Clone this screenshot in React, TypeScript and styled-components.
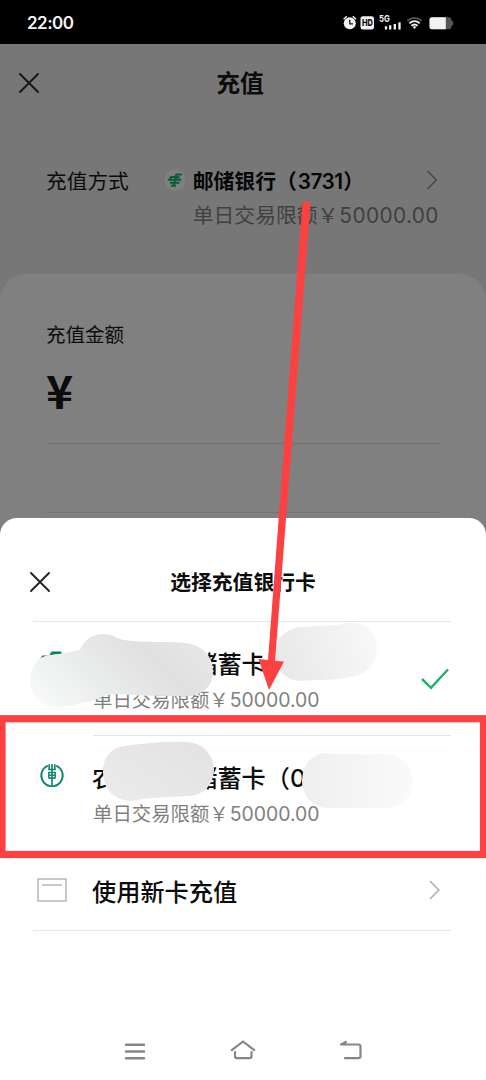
import React from 'react';
import styled, { createGlobalStyle } from 'styled-components';

const GlobalStyle = createGlobalStyle`
  * { box-sizing: border-box; }
  body { margin: 0; background: #fff; }
  svg { display: block; flex: none; }
`;

const Phone = styled.div`
  position: relative;
  width: 486px;
  height: 1080px;
  overflow: hidden;
  background: #777;
  color: #0c0c0c;
  font-family: Inter, 'Noto Sans CJK SC', sans-serif;
`;

const StatusBar = styled.header`
  display: flex;
  align-items: center;
  justify-content: space-between;
  height: 44px;
  padding: 2px 32px 0 27px;
  background: #000;
  color: #f4f4f4;
`;

const Clock = styled.span`
  font-size: 17px;
  font-weight: 600;
  line-height: 20px;
  letter-spacing: -0.5px;
`;

const StatusIcons = styled.div`
  display: flex;
  align-items: center;
`;

const TitleBar = styled.div<{ $height: number; $left: number; $size: number; $top?: number; $end?: number }>`
  display: grid;
  grid-template-columns: 60px 1fr ${(p) => p.$end ?? 60}px;
  align-items: center;
  height: ${(p) => p.$height}px;
  padding-top: ${(p) => p.$top ?? 0}px;
  > svg { margin-left: ${(p) => p.$left}px; }
  > h1 { font-size: ${(p) => p.$size}px; }
`;

const Title = styled.h1`
  margin: 0;
  padding-top: 2px;
  text-align: center;
  font-weight: 700;
  line-height: 32px;
  white-space: nowrap;
`;

const Method = styled.section`
  display: flex;
  height: 152px;
  padding: 44px 46px 0 46px;
`;

const FieldLabel = styled.div<{ $size: number }>`
  padding-top: 1px;
  font-size: ${(p) => p.$size}px;
  line-height: 30px;
  font-weight: 400;
  white-space: nowrap;
`;

const MethodIcon = styled.div`
  display: flex;
  align-items: center;
  height: 28px;
  margin: 0 7px 0 35px;
`;

const MethodText = styled.div`
  flex: 1;
  width: 0;
  white-space: nowrap;
`;

const MethodName = styled.div`
  padding-top: 1px;
  font-size: 20.8px;
  font-weight: 600;
  line-height: 30px;
  color: #050505;
`;

const Digits = styled.span<{ $spacing?: number; $before?: number; $after?: number }>`
  margin-left: ${(p) => p.$before ?? 1}px;
  margin-right: ${(p) => p.$after ?? 0}px;
  letter-spacing: ${(p) => p.$spacing ?? 0}px;
`;

const Limit = styled.div<{ $size: number; $color: string; $gap: number }>`
  padding-top: ${(p) => p.$gap}px;
  font-size: ${(p) => p.$size}px;
  line-height: 30px;
  color: ${(p) => p.$color};
  white-space: nowrap;
`;

const MethodArrow = styled.div`
  display: flex;
  align-items: center;
  width: 14px;
  height: 28px;
`;

const AmountCard = styled.section`
  height: 806px;
  padding: 45px 46px 0;
  border-radius: 26px 26px 0 0;
  background: #808080;
`;

const Currency = styled.div`
  height: 94px;
  padding-top: 9px;
  border-bottom: 1px solid #737373;
  font-family: 'Noto Sans CJK SC', sans-serif;
  font-size: 46px;
  font-weight: 700;
  line-height: 60px;
`;

const AmountNote = styled.div`
  height: 69px;
  border-bottom: 1px solid #757575;
`;

const Sheet = styled.section`
  position: absolute;
  left: 0;
  right: 0;
  top: 518px;
  bottom: 0;
  display: flex;
  flex-direction: column;
  border-radius: 17px 17px 0 0;
  background: #fff;
`;

const CardList = styled.div`
  margin: 0 35px 0 33px;
  border-top: 1px solid #e6e6e6;
  border-bottom: 1px solid #e6e6e6;
`;

const CardRow = styled.div<{ $height: number; $top: number }>`
  display: grid;
  grid-template-columns: 60px 1fr 31px;
  height: ${(p) => p.$height}px;
  > * { padding-top: ${(p) => p.$top}px; }
`;

const CardInfo = styled.div<{ $divided?: boolean }>`
  grid-column: ${(p) => (p.$divided ? '2 / 4' : 'auto')};
  border-top: ${(p) => (p.$divided ? '1px solid #e3e6e6' : 'none')};
  white-space: nowrap;
`;

const CardName = styled.div`
  margin-left: -1px;
  padding-top: 1px;
  font-size: 24.2px;
  font-weight: 500;
  line-height: 36px;
  word-spacing: -2px;
`;

const IconCell = styled.div<{ $shift: number; $left?: number }>`
  display: flex;
  align-items: flex-start;
  svg {
    margin-top: ${(p) => p.$shift}px;
    margin-left: ${(p) => p.$left ?? 0}px;
  }
`;

const NavBar = styled.nav`
  display: flex;
  align-items: center;
  justify-content: space-between;
  height: 58px;
  margin-top: auto;
  padding: 0 122px 0 122px;
`;

const Annotations = styled.svg`
  position: absolute;
  inset: 0;
`;

const CloseIcon = ({ color }: { color: string }) => (
  <svg width="20" height="20" viewBox="0 0 20 20" stroke={color} strokeWidth="1.9" strokeLinecap="round">
    <path d="M1 1L19 19M19 1L1 19" />
  </svg>
);

const Chevron = ({ color }: { color: string }) => (
  <svg width="12" height="20" viewBox="0 0 12 20" fill="none" stroke={color} strokeWidth="1.7">
    <path d="M1.5 1L10.3 10L1.5 19" />
  </svg>
);

const PostBankLogo = ({ size, disc, color }: { size: number; disc: string; color: string }) => (
  <svg width={size} height={size} viewBox="0 0 22 22">
    <circle cx="11" cy="11" r="10.5" fill={disc} />
    <g fill="none" stroke={color} strokeWidth="1.9">
      <path d="M18 5.5H12.5L11 8H6.8L6 9.8M3.8 10.8H17.2M6 13.8H15.5M15.8 8.2H11M12.6 5.5L9.5 17M7 16.8H12" />
    </g>
  </svg>
);

const AgriBankLogo = () => (
  <svg width="34" height="34" viewBox="0 0 34 34" fill="none">
    <circle cx="17" cy="17" r="16" fill="#fffefe" stroke="#f8f1f0" strokeWidth="0.8" />
    <g stroke="#148774">
      <path strokeWidth="2.1" d="M12.8 6.6A10.8 10.8 0 0 0 14.6 27M21.2 6.6A10.8 10.8 0 0 1 19.4 27" />
      <path strokeWidth="1.7" d="M17 5V28M14.2 5.2V11M19.8 5.2V11" />
      <path strokeWidth="1.5" d="M13.3 10.5H20.7M13.6 13.6H20.4M13.6 16.3H20.4M13.8 12.8V19.5M20.2 12.8V19.5" />
      <path strokeWidth="1.8" d="M14 19.2H20M14 27.2H20" />
    </g>
  </svg>
);

export default function App() {
  return (
    <Phone>
      <GlobalStyle />
      <StatusBar>
        <Clock>22:00</Clock>
        <StatusIcons>
          <svg width="111" height="18" viewBox="343 13.7 111 18">
            <circle cx="349.8" cy="23" r="6" fill="#f2f2f2" />
            <path d="M343.6 19L346.8 16M356 19L352.8 16" stroke="#f2f2f2" strokeWidth="1.4" />
            <path d="M349.8 19.5V23.6H353" stroke="#111" strokeWidth="1.3" fill="none" />
            <rect x="360.5" y="16" width="13.5" height="13.3" rx="2.5" fill="#f2f2f2" />
            <text x="361.9" y="26.2" fontSize="9.6" fontWeight="800" fill="#111" textLength="11" lengthAdjust="spacingAndGlyphs">HD</text>
            <text x="379" y="22.2" fontSize="9.3" fontWeight="700" fill="#f2f2f2" textLength="10.8" lengthAdjust="spacingAndGlyphs">5G</text>
            <path d="M386 26V29.3M390.2 25V29.3M394.8 23.7V29.3" stroke="#f2f2f2" strokeWidth="2.3" />
            <path d="M399.5 22V29.3" stroke="#f2f2f2" strokeWidth="2.3" />
            <g fill="none" strokeWidth="1.8">
              <path d="M407.3 20.5Q414.5 14.6 421.7 20.5" stroke="#555" />
              <path d="M409.3 23Q414.5 18.7 419.7 23" stroke="#f2f2f2" />
              <path d="M411.4 25.5Q414.5 22.9 417.6 25.5" stroke="#f2f2f2" />
            </g>
            <path d="M412.5 26.5Q414.5 25.3 416.5 26.5L414.5 28.7Z" fill="#f2f2f2" />
            <path d="M432 17H449Q451.4 17 451.4 19.4V20.3L453.2 21.3V24.8L451.4 25.8V26.6Q451.4 29 449 29H432Q429.5 29 429.5 26.5V19.5Q429.5 17 432 17Z" fill="#555" />
            <path d="M445.8 17H432Q429.5 17 429.5 19.5V26.5Q429.5 29 432 29H445.8Z" fill="#f2f2f2" />
          </svg>
        </StatusIcons>
      </StatusBar>

      <TitleBar $height={78} $left={18.5} $size={23.8} $end={66}>
        <CloseIcon color="#161616" />
        <Title>充值</Title>
      </TitleBar>

      <Method>
        <FieldLabel $size={20.7}>充值方式</FieldLabel>
        <MethodIcon>
          <PostBankLogo size={22} disc="#808080" color="#075f38" />
        </MethodIcon>
        <MethodText>
          <MethodName>
            邮储银行（<Digits $spacing={-0.5} $after={0.5}>3731</Digits>）
          </MethodName>
          <Limit $size={20.8} $color="#404040" $gap={4}>
            单日交易限额￥<Digits $spacing={0.4}>50000.00</Digits>
          </Limit>
        </MethodText>
        <MethodArrow>
          <Chevron color="#4b4b4b" />
        </MethodArrow>
      </Method>

      <AmountCard>
        <FieldLabel $size={19.5}>充值金额</FieldLabel>
        <Currency>¥</Currency>
        <AmountNote />
      </AmountCard>

      <Sheet>
        <TitleBar $height={103} $left={30} $size={20.8} $top={24}>
          <CloseIcon color="#222" />
          <Title>选择充值银行卡</Title>
        </TitleBar>
        <CardList>
          <CardRow $height={113} $top={24}>
            <IconCell $shift={-2} $left={-1}>
              <PostBankLogo size={36} disc="#fff" color="#00864f" />
            </IconCell>
            <CardInfo>
              <CardName>邮储银行 储蓄卡</CardName>
              <Limit $size={19.4} $color="#7f7f7f" $gap={2}>
                单日交易限额￥<Digits>50000.00</Digits>
              </Limit>
            </CardInfo>
            <IconCell $shift={22}>
              <svg width="30" height="22" viewBox="0 0 30 22" fill="none" stroke="#1db36b" strokeWidth="2.5">
                <path d="M2 11L11 19.8L28 1.5" />
              </svg>
            </IconCell>
          </CardRow>
          <CardRow $height={119} $top={24}>
            <IconCell $shift={0} $left={1.5}>
              <AgriBankLogo />
            </IconCell>
            <CardInfo $divided>
              <CardName>农业银行 储蓄卡（0</CardName>
              <Limit $size={19.4} $color="#7f7f7f" $gap={2}>
                单日交易限额￥<Digits>50000.00</Digits>
              </Limit>
            </CardInfo>
          </CardRow>
          <CardRow $height={76} $top={20}>
            <IconCell $shift={4}>
              <svg width="34" height="24" viewBox="0 0 34 24" fill="none" stroke="#b7b7b7" strokeWidth="1.5">
                <path d="M5 1H33V23H5ZM9 7H29" />
              </svg>
            </IconCell>
            <CardInfo>
              <CardName>使用新卡充值</CardName>
            </CardInfo>
            <IconCell $shift={6} $left={1}>
              <svg width="20" height="20" viewBox="0 0 20 20" fill="none" stroke="#b2b2b2" strokeWidth="1.7">
                <path d="M9 1L17.8 10L9 19" />
              </svg>
            </IconCell>
          </CardRow>
        </CardList>
        <NavBar>
          <svg width="26" height="24" viewBox="0 0 26 24" stroke="#858585" strokeWidth="2.4" strokeLinecap="round">
            <path d="M4 5.8H22M4 12.5H22M4 19.3H22" />
          </svg>
          <svg width="28" height="24" viewBox="0 0 28 24" fill="none" stroke="#858585" strokeWidth="2.2" strokeLinecap="round" strokeLinejoin="round">
            <path d="M2.8 11.2L14 2.5L25.2 11.2M6 13V17.3Q6 19.2 8 19.2H20.5Q22.5 19.2 22.5 17.3V13" />
          </svg>
          <svg width="26" height="24" viewBox="0 0 26 24" fill="none" stroke="#858585" strokeWidth="2.2" strokeLinecap="round" strokeLinejoin="round">
            <path d="M8 3L3 5.5H20.5Q22.5 5.5 22.5 7.5V17.3Q22.5 19.2 20.5 19.2H7" />
          </svg>
        </NavBar>
      </Sheet>

      <Annotations width="486" height="1080" viewBox="0 0 486 1080">
        <defs>
          <linearGradient id="smudgeA" x1="0" y1="0.8" x2="1" y2="0.4">
            <stop offset="0" stopColor="#f8faf9" />
            <stop offset="0.45" stopColor="#e8e9e9" />
            <stop offset="0.75" stopColor="#e0e0e0" />
            <stop offset="1" stopColor="#e6e6e6" />
          </linearGradient>
          <linearGradient id="smudgeB" x1="0" y1="0.5" x2="1" y2="0.3">
            <stop offset="0" stopColor="#e8e8e8" />
            <stop offset="1" stopColor="#f8f8f8" />
          </linearGradient>
          <linearGradient id="smudgeC" x1="0" y1="1" x2="1" y2="0.2">
            <stop offset="0" stopColor="#ebebeb" />
            <stop offset="1" stopColor="#e3e3e3" />
          </linearGradient>
          <linearGradient id="smudgeD" x1="0" y1="0.5" x2="1" y2="0.5">
            <stop offset="0" stopColor="#efefef" />
            <stop offset="1" stopColor="#fafafa" />
          </linearGradient>
        </defs>
        <path fill="url(#smudgeA)" d="M50 655Q62 654 80 650C85 638 94 634 104 634C112 634 115 638 124 640C145 643 168 641 186 643C202 645 213 656 213 671C213 687 202 696 186 696C164 696 140 696 116 694C104 694 97 701 82 703Q68 707 57 707C41 707 30 697 30 680C30 666 39 656 50 655Z" />
        <path fill="url(#smudgeB)" d="M301 627C318 625 334 627 346 623C364 621 377 633 377 648C377 664 366 675 350 677C333 681 320 679 301 681C286 681 274 669 275 653C276 638 286 628 301 627Z" />
        <path fill="url(#smudgeC)" d="M125 746C147 743 169 741 187 742C204 743 214 756 214 770C213 786 203 795 189 796C168 797 151 797 130 801C114 800 103 788 103 772C103 757 111 748 125 746Z" />
        <path fill="url(#smudgeD)" d="M324 753C344 755 366 754 386 754C402 755 413 766 413 781C412 797 402 807 386 808H328C312 807 302 796 302 780C303 765 311 755 324 753Z" />
        <rect x="2" y="718.7" width="481.5" height="135.8" fill="none" stroke="#fd4141" strokeWidth="7.2" />
        <path fill="#fd4141" d="M302.5 202L310.5 201.5L275 661L284 661.5L269 690L258.5 659L268 660Z" />
      </Annotations>
    </Phone>
  );
}
